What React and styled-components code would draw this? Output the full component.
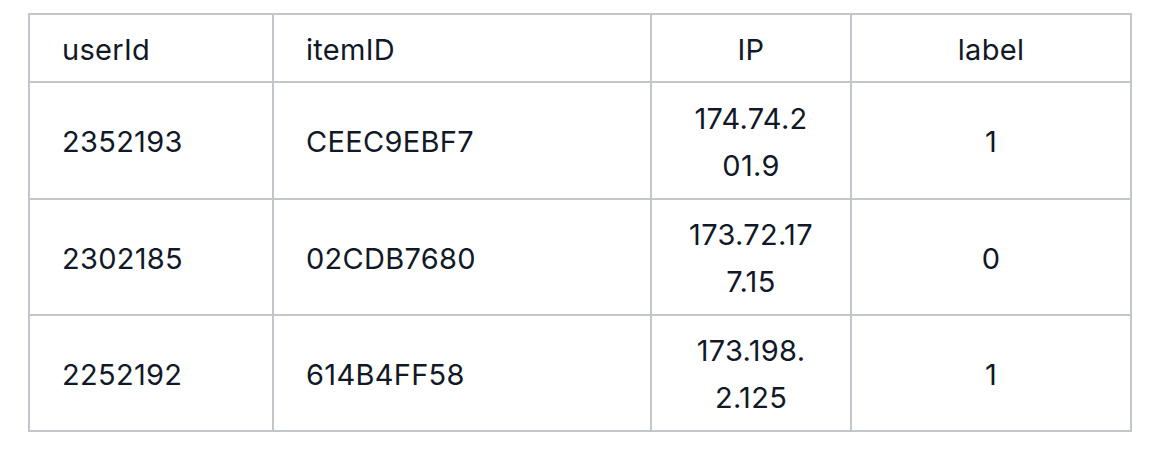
import React from "react";
import styled, { createGlobalStyle } from "styled-components";

const GlobalStyle = createGlobalStyle`
  html, body {
    margin: 0;
    padding: 0;
    background: #ffffff;
  }
  body {
    font-family: Inter, "Noto Sans", "Liberation Sans", sans-serif;
    color: #111827;
  }
`;

const Page = styled.div`
  padding: 13px 0 0 28px;
`;

const Grid = styled.div`
  display: grid;
  grid-template-columns: 242px 376px 198px 278px;
  grid-template-rows: 66px 115px 114px 114px;
  gap: 2px;
  padding: 2px;
  width: max-content;
  background: #c2c5cc;
`;

const Cell = styled.div`
  display: flex;
  flex-direction: column;
  justify-content: center;
  align-items: ${(p) => (p.$center ? "center" : "flex-start")};
  text-align: ${(p) => (p.$center ? "center" : "left")};
  padding: 2px 32px 0;
  background: #ffffff;
  font-size: 29px;
  line-height: 47px;
  letter-spacing: 0.3px;
`;

const Line = styled.span`
  display: block;
  white-space: nowrap;
`;

const columns = [
  { key: "userId", title: "userId" },
  { key: "itemId", title: "itemID" },
  { key: "ip", title: "IP", center: true },
  { key: "label", title: "label", center: true },
];

const rows = [
  { userId: "2352193", itemId: "CEEC9EBF7", ip: ["174.74.2", "01.9"], label: "1" },
  { userId: "2302185", itemId: "02CDB7680", ip: ["173.72.17", "7.15"], label: "0" },
  { userId: "2252192", itemId: "614B4FF58", ip: ["173.198.", "2.125"], label: "1" },
];

const renderValue = (value) =>
  Array.isArray(value) ? value.map((part) => <Line key={part}>{part}</Line>) : value;

export default function App() {
  return (
    <>
      <GlobalStyle />
      <Page>
        <Grid>
          {columns.map((c) => (
            <Cell key={c.key} $center={c.center}>
              {c.title}
            </Cell>
          ))}
          {rows.map((r) =>
            columns.map((c) => (
              <Cell key={r.userId + c.key} $center={c.center}>
                {renderValue(r[c.key])}
              </Cell>
            ))
          )}
        </Grid>
      </Page>
    </>
  );
}
